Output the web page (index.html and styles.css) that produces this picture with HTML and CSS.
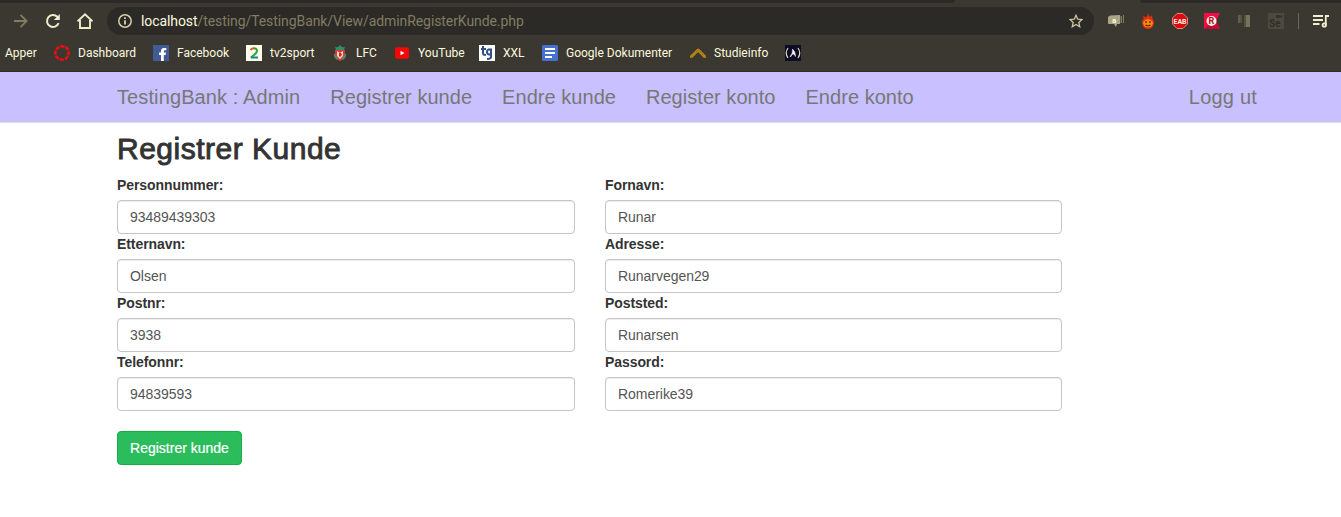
FILE: index.html
```html
<!DOCTYPE html>
<html lang="no">
<head>
<meta charset="utf-8">
<title>TestingBank : Admin</title>
<link rel="stylesheet" href="styles.css">
</head>
<body>
<div class="browser">
  <div class="tabstrip"><span class="tabs-left"></span><span class="tabs-right"></span></div>
  <div class="toolbar">
    <div class="nav-icons">
      <svg width="16" height="16" viewBox="0 0 16 16" fill="none" stroke="#827c62" stroke-width="1.8"><path d="M1 8h12M7.5 1.8 13.7 8l-6.2 6.2"/></svg>
      <svg width="16" height="16" viewBox="0 0 16 16" fill="none" stroke="#f0edca" stroke-width="2"><path d="M13.6 10.2A6 6 0 1 1 12.3 3.8L13.6 5.2"/><path d="M14.8 1v6H8.8z" fill="#f0edca" stroke="none"/></svg>
      <svg width="16" height="16" viewBox="1 0 16 16" fill="none" stroke="#f0edca" stroke-width="1.9"><path d="M1.500 8.400 9 1.400l7.500 7M4 7v8h10V7"/></svg>
    </div>
    <div class="omnibox">
      <svg class="info" width="14" height="14" viewBox="0 0 14 14" fill="none" stroke="#d4d0ac" stroke-width="1.5"><circle cx="7" cy="7" r="6.2"/><path d="M7 6.200v4.300M7 3.300v1.700" stroke-width="1.8"/></svg>
      <span class="url"><span class="host">localhost</span>/testing/TestingBank/View/adminRegisterKunde.php</span>
      <svg class="star" width="14" height="14" viewBox="0 0 14 14" fill="none" stroke="#cbc69c" stroke-width="1.3"><path d="m7 1.300 1.700 3.900 4.300.4-3.200 2.900.9 4.200L7 10.500l-3.700 2.200.9-4.200L1 5.600l4.300-.4z"/></svg>
    </div>
    <div class="extensions">
      <svg width="16" height="16" viewBox="0 0 16 16"><path d="M2 2.500 12 2v9H9l-1 3-2-3H1q-1 0-1-1V4z" fill="#aaa685"/><path d="M12.500 3h1.500v7h-1.500zM15 2h1v8h-1z" fill="#807c64"/><text x="4" y="9.500" class="g-a">a</text></svg>
      <svg width="16" height="16" viewBox="0 0 16 16"><path d="M8 0q.5 3 2.500 4 .7-1 .5-2 2 2 1.600 4Q15 8 13.500 12 12 16 8 16T2.500 12Q1 8 3.500 6q0-1.500-.5-3 2 0 2.500 1.500Q8 3 8 0z" fill="#e52e0c"/><ellipse cx="8" cy="10.300" rx="4.800" ry="4" fill="#f58a12"/><path d="M6 8v2M10 8v2M5.500 12q2.500 1.500 5 0" fill="none" stroke="#5a1b08" stroke-width="1.200"/></svg>
      <svg width="16" height="16" viewBox="0 0 16 16"><path d="M5 .5h6L15.500 5v6L11 15.500H5L.5 11V5z" fill="#d70b12" stroke="#e78478"/><text x="8" y="10.500" text-anchor="middle" class="g-eab">EAB</text></svg>
      <svg width="16" height="16" viewBox="0 0 16 16"><path d="M0 0h16l-4 8 4 8H0z" fill="#f70b45"/><path d="M0 16 6 11h7l3 5z" fill="#c10b35"/><circle cx="7.500" cy="8" r="5" fill="#fff0e0"/><text x="7.500" y="11" text-anchor="middle" class="g-r">R</text></svg>
      <svg width="16" height="16" viewBox="0 0 16 16"><path d="M2 2h4v8H2z" fill="#625e4c"/><path d="M8 2h6v12H8z" fill="#77725a"/><path d="M4 2h2v8H4zM8 2h2v12H8z" fill="#555141"/></svg>
      <svg width="16" height="16" viewBox="0 0 16 16"><path d="M0 0h16v16H0z" fill="#4d4a3d"/><path d="M8 2h4v1l2-1v3l-2-1v1H8z" fill="#343229"/><text x="1" y="14" class="g-se">Se</text></svg>
    </div>
    <span class="divider"></span>
    <svg class="queue" width="16" height="14" viewBox="0 0 16 14" fill="none" stroke="#f0edca" stroke-width="1.800"><path d="M0 2h10M0 6h10M0 10h6.500M12.800 11V2H16"/><circle cx="11.300" cy="11" r="1.700"/></svg>
  </div>
  <div class="bookmarks">
    <span class="bookmark">Apper</span>
    <span class="bookmark"><svg width="16" height="16" viewBox="0 0 16 16"><circle cx="8" cy="8" r="6.700" fill="none" stroke="#ee0c12" stroke-width="2.500" stroke-dasharray="4.260 1" stroke-dashoffset="2"/></svg>Dashboard</span>
    <span class="bookmark"><svg width="16" height="16" viewBox="0 0 16 16"><path d="M0 0h16v16H0z" fill="#435b94"/><path d="M8 16v-6H6V7.500h2V6q0-3 3-3h2.300v2.300H12q-1.200 0-1.200 1.200v1H13l-.4 2.500h-1.800v6z" fill="#fff"/></svg>Facebook</span>
    <span class="bookmark"><svg width="16" height="16" viewBox="0 0 16 16"><path d="M0 0h16v16H0z" fill="#fbffe9"/><g fill="none" stroke-width="2"><path d="M4.500 5Q6 3 8.300 3.200" stroke="#f04e24"/><path d="M8 3.200q4 .6 2.500 4-1 2-5.800 5.500" stroke="#20a63b"/><path d="M5 12.500h7" stroke="#28799b"/></g></svg>tv2sport</span>
    <span class="bookmark"><svg width="16" height="16" viewBox="0 0 16 16"><path d="M3 2q3 1 5-2 2 3 5 2l-1 3H4z" fill="#2e8e69"/><path d="M3 5h10v5q0 4-5 6-5-2-5-6z" fill="#d63a34"/><path d="M2 8q-1 4 3 7l1-2-3-3zM14 8q1 4-3 7l-1-2 3-3z" fill="#429471"/><path d="m5 6 3 2 3-2v5l-3 3-3-3z" fill="#f6d9c4"/><path d="M7 8h2l1 2-2 2-1-1z" fill="#c92723"/></svg>LFC</span>
    <span class="bookmark"><svg width="16" height="16" viewBox="0 0 16 16"><rect x="1" y="2.300" width="14" height="11.400" rx="2.800" fill="#f90506"/><path d="m6.500 5.800 4 2.200-4 2.200z" fill="#fff"/></svg>YouTube</span>
    <span class="bookmark"><svg width="16" height="16" viewBox="0 0 16 16"><path d="M0 0h16v16H0z" fill="#fff"/><path d="M4 1v7.500q0 1.500 3 1.500M2 4h5M12 4.500H9.500Q8 5 8 7t2 2.500h2M12 3.500V12q0 2-4 2" fill="none" stroke="#344e89" stroke-width="2"/></svg>XXL</span>
    <span class="bookmark"><svg width="16" height="16" viewBox="0 0 16 16"><rect width="16" height="16" rx="1.500" fill="#4571d3"/><path d="M3 4h10M3 8h10M3 12h7" stroke="#fff" stroke-width="1.800"/></svg>Google Dokumenter</span>
    <span class="bookmark"><svg width="16" height="16" viewBox="0 0 16 16"><path d="m1.500 11.500 6.700-6.500 6.300 6.500" fill="none" stroke="#b98710" stroke-width="3" stroke-linecap="round" stroke-linejoin="round"/><path d="m1.500 11.500 6.700-6.500 6.300 6.500" fill="none" stroke="#765c1d" stroke-dasharray="1 2"/></svg>Studieinfo</span>
    <span class="bookmark"><svg width="16" height="16" viewBox="0 0 16 16"><path d="M0 0h16v16H0z" fill="#0d0b25"/><path d="M3 3Q-.5 8 3 13M13 3q3.500 5 0 10" fill="none" stroke="#dddabd" stroke-width="1.200"/><path d="M5 11.500Q8 8.500 7.500 4q3 2.500 3 7.500-1-3-2.500-2.500T6 11.500z" fill="#fff" stroke="#fff" stroke-width=".5"/></svg></span>
  </div>
</div>
<nav class="navbar">
  <div class="container nav-row">
    <a class="brand">TestingBank : Admin</a><a>Registrer kunde</a><a>Endre kunde</a><a>Register konto</a><a>Endre konto</a><a class="logout">Logg ut</a>
  </div>
</nav>
<main class="container">
  <h2>Registrer Kunde</h2>
  <form class="fields">
    <label>Personnummer:<input value="93489439303"></label>
    <label>Fornavn:<input value="Runar"></label>
    <label>Etternavn:<input value="Olsen"></label>
    <label>Adresse:<input value="Runarvegen29"></label>
    <label>Postnr:<input value="3938"></label>
    <label>Poststed:<input value="Runarsen"></label>
    <label>Telefonnr:<input value="94839593"></label>
    <label>Passord:<input value="Romerike39"></label>
  </form>
  <button class="submit" type="button">Registrer kunde</button>
</main>
</body>
</html>
```
FILE: styles.css
```css
* { box-sizing: border-box; }
body { margin: 0; height: 517px; overflow: hidden; background: #fff; color: #333; font: 14px/20px "Liberation Sans", Arial, sans-serif; }
svg { display: block; flex: none; }
.browser { height: 72px; background: #3b3832; border-bottom: 1px solid #2d2a25; font-family: Roboto, sans-serif; }
.tabstrip { height: 3px; display: flex; justify-content: space-between; }
.tabs-left { width: 955px; background: #2b2a26; border-radius: 0 0 4px 0; }
.tabs-right { width: 201px; background: #2b2a26; border-radius: 0 0 0 4px; }
.toolbar { display: flex; align-items: center; height: 36px; }
.nav-icons { display: flex; gap: 16px; width: 107px; padding-left: 13px; }
.omnibox { display: flex; align-items: center; width: 987px; height: 28px; padding: 0 11px; border-radius: 14px; background: #2b2a26; }
.url { margin-left: 9px; color: #827c62; font-size: 14px; letter-spacing: -.08px; white-space: nowrap; }
.host { color: #fbf9df; }
.star { margin-left: auto; }
.extensions { display: flex; gap: 16px; margin-left: 14px; }
.divider { width: 1px; height: 16px; margin: 0 14px; background: #6c6854; }
.bookmarks { display: grid; grid-template-columns: 49px 99px 93px 86px 62px 85px 63px 148px 95px 16px; height: 28px; padding-left: 5px; align-items: center; color: #fbf9df; font-size: 12px; }
.bookmark { display: flex; align-items: center; gap: 8px; white-space: nowrap; }
.g-a { font: bold 8px Roboto, sans-serif; fill: #fffbe0; }
.g-eab { font: bold 7px Roboto, sans-serif; fill: #fff0df; }
.g-r { font: bold 9px Roboto, sans-serif; fill: #b20c28; }
.g-se { font: bold 10px Roboto, sans-serif; fill: #302e26; }
.navbar { height: 51px; background: #c9c0ff; border-bottom: 1px solid #e0e0e8; }
.container { width: 1170px; margin: 0 auto 0 102px; padding: 0 15px; }
.nav-row { display: flex; gap: 30px; padding-top: 15px; color: #777; font-size: 20px; letter-spacing: .04px; white-space: nowrap; }
.brand { letter-spacing: .11px; }
.logout { margin-left: auto; letter-spacing: .2px; }
h2 { margin: 9px 0; height: 34px; font-size: 30px; font-weight: 400; line-height: 34px; letter-spacing: .5px; -webkit-text-stroke: .9px #333; }
.fields { display: grid; grid-template-columns: 458px 457px; column-gap: 30px; }
label { height: 59px; font-weight: 700; letter-spacing: -.08px; }
input { display: block; width: 100%; height: 34px; margin-top: 5px; padding: 6px 12px; border: 1px solid #c5c5c5; border-radius: 4px; box-shadow: inset 0 1px 1px rgba(0,0,0,.075); color: #555; font: 14px/20px "Liberation Sans", Arial, sans-serif; letter-spacing: -.04px; }
.submit { display: block; width: 125px; height: 34px; margin-top: 20px; padding: 0; border: 1px solid #0daf4b; border-radius: 4px; background: #2bbd5b; color: #fff; font: 14px/20px "Liberation Sans", Arial, sans-serif; -webkit-text-stroke: .2px #fff; }
```
